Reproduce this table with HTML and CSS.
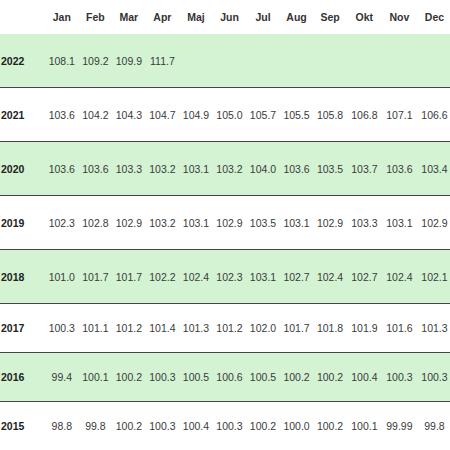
FILE: index.html
```html
<!DOCTYPE html>
<html>
<head>
<meta charset="utf-8">
<link rel="stylesheet" href="styles.css">
</head>
<body>
<table class="cpi">
<colgroup>
<col class="c-year">
<col class="c-m"><col class="c-m"><col class="c-m"><col class="c-m"><col class="c-m"><col class="c-m"><col class="c-m"><col class="c-m"><col class="c-m">
<col class="c-w"><col class="c-w"><col class="c-w">
</colgroup>
<thead>
<tr class="head"><th></th><th>Jan</th><th>Feb</th><th>Mar</th><th>Apr</th><th>Maj</th><th>Jun</th><th>Jul</th><th>Aug</th><th>Sep</th><th>Okt</th><th>Nov</th><th>Dec</th></tr>
</thead>
<tbody>
<tr class="row tall green"><th>2022</th><td>108.1</td><td>109.2</td><td>109.9</td><td>111.7</td><td></td><td></td><td></td><td></td><td></td><td></td><td></td><td></td></tr>
<tr class="row tall"><th>2021</th><td>103.6</td><td>104.2</td><td>104.3</td><td>104.7</td><td>104.9</td><td>105.0</td><td>105.7</td><td>105.5</td><td>105.8</td><td>106.8</td><td>107.1</td><td>106.6</td></tr>
<tr class="row tall green"><th>2020</th><td>103.6</td><td>103.6</td><td>103.3</td><td>103.2</td><td>103.1</td><td>103.2</td><td>104.0</td><td>103.6</td><td>103.5</td><td>103.7</td><td>103.6</td><td>103.4</td></tr>
<tr class="row tall"><th>2019</th><td>102.3</td><td>102.8</td><td>102.9</td><td>103.2</td><td>103.1</td><td>102.9</td><td>103.5</td><td>103.1</td><td>102.9</td><td>103.3</td><td>103.1</td><td>102.9</td></tr>
<tr class="row tall green"><th>2018</th><td>101.0</td><td>101.7</td><td>101.7</td><td>102.2</td><td>102.4</td><td>102.3</td><td>103.1</td><td>102.7</td><td>102.4</td><td>102.7</td><td>102.4</td><td>102.1</td></tr>
<tr class="row short"><th>2017</th><td>100.3</td><td>101.1</td><td>101.2</td><td>101.4</td><td>101.3</td><td>101.2</td><td>102.0</td><td>101.7</td><td>101.8</td><td>101.9</td><td>101.6</td><td>101.3</td></tr>
<tr class="row short green"><th>2016</th><td>99.4</td><td>100.1</td><td>100.2</td><td>100.3</td><td>100.5</td><td>100.6</td><td>100.5</td><td>100.2</td><td>100.2</td><td>100.4</td><td>100.3</td><td>100.3</td></tr>
<tr class="row short"><th>2015</th><td>98.8</td><td>99.8</td><td>100.2</td><td>100.3</td><td>100.4</td><td>100.3</td><td>100.2</td><td>100.0</td><td>100.2</td><td>100.1</td><td>99.99</td><td>99.8</td></tr>
</tbody>
</table>
</body>
</html>
```

FILE: styles.css
```css
html, body {
  margin: 0;
  padding: 0;
  background: #ffffff;
}
body {
  font-family: "Liberation Sans", Arial, sans-serif;
  font-size: 10.5px;
  color: #333333;
  overflow: hidden;
}
.cpi {
  border-collapse: collapse;
  table-layout: fixed;
  width: 452px;
}
.c-year { width: 45px; }
.c-m { width: 33.5px; }
.c-w { width: 35px; }
.cpi th, .cpi td {
  padding: 0;
  text-align: center;
  white-space: nowrap;
}
.head th {
  height: 34px;
  font-weight: bold;
  color: #333333;
}
.row {
  border-bottom: 1px solid #444444;
}
.row th {
  text-align: left;
  padding-left: 1px;
  font-weight: bold;
  color: #222222;
}
.row td {
  color: #3a3a3a;
}
.tall th, .tall td { height: 53px; }
.short th, .short td { height: 48px; }
.green {
  background: #d3f3d3;
}
```
